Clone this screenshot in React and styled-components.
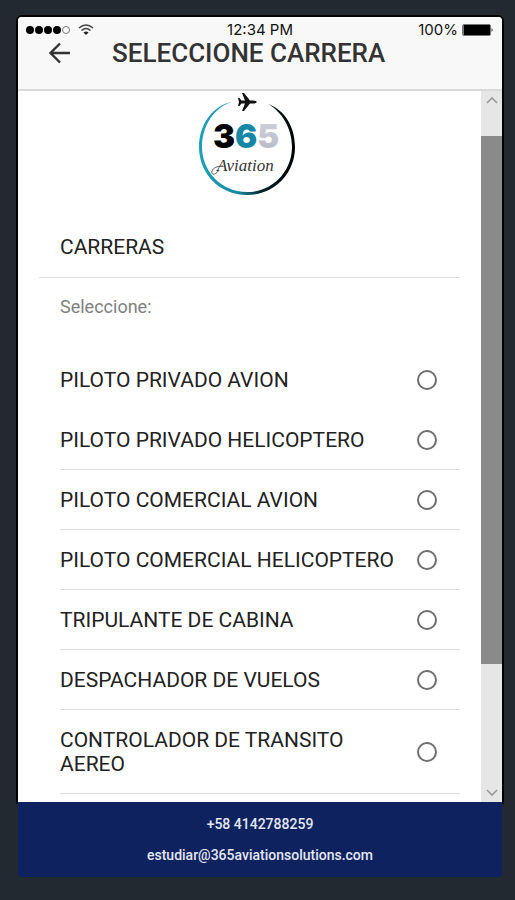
import React, { useState } from 'react';
import styled, { createGlobalStyle } from 'styled-components';

const GlobalStyle = createGlobalStyle`
  * {
    box-sizing: border-box;
  }

  body {
    margin: 0;
    background-color: #232931;
    font-family: Roboto, 'Liberation Sans', sans-serif;
  }
`;

const Page = styled.div`
  display: flex;
  flex-direction: column;
  height: 100vh;
  padding: 17px 13px 23px 18px;
`;

const Screen = styled.div`
  display: flex;
  flex-direction: column;
  flex: 1;
  min-height: 0;
  background-color: #fff;
  border-radius: 4px 4px 0 0;
  box-shadow: 0 0 0 2px #000;
`;

const Header = styled.header`
  background-color: #f8f8f8;
  border-bottom: 2px solid #d9d9d9;
  border-radius: 4px 4px 0 0;
  padding-bottom: 22px;
`;

const StatusBar = styled.div`
  display: grid;
  grid-template-columns: 1fr auto 1fr;
  align-items: center;
  height: 22px;
  padding: 4px 8px 0;
  color: #111;
  font-family: Inter, sans-serif;
  font-size: 15px;
  line-height: 18px;
`;

const Signal = styled.div`
  display: flex;
  align-items: center;
  gap: 8px;
`;

const Battery = styled.div`
  display: flex;
  align-items: center;
  justify-content: flex-end;
  gap: 4px;
`;

const TitleBar = styled.div`
  display: flex;
  align-items: center;
  gap: 40px;
  height: 28px;
  padding: 0 30px;
`;

const BackButton = styled.button`
  display: flex;
  padding: 0;
  border: none;
  background: none;
  color: #333;
  cursor: pointer;
`;

const Title = styled.h1`
  margin: 0;
  color: #333;
  font-size: 26px;
  font-weight: 500;
  line-height: 28px;
  white-space: nowrap;
`;

const Body = styled.div`
  display: flex;
  flex: 1;
  min-height: 0;
`;

const Content = styled.main`
  flex: 1;
  min-width: 0;
  padding: 0 21px;
  overflow: hidden;
`;

const LogoBox = styled.div`
  display: flex;
  justify-content: center;
  height: 126px;
`;

const SectionTitle = styled.h2`
  margin: 0;
  padding: 18px 21px;
  border-bottom: 1px solid #dedede;
  color: #222;
  font-size: 21px;
  font-weight: 400;
  line-height: 24px;
`;

const Options = styled.fieldset`
  min-width: 0;
  margin: 0;
  padding: 0 0 0 21px;
  border: none;
`;

const Legend = styled.legend`
  padding: 17px 0 31px;
  color: #808080;
  font-size: 18px;
  line-height: 24px;
`;

const Option = styled.label`
  display: flex;
  align-items: center;
  justify-content: space-between;
  gap: 12px;
  padding: 18px 23px 18px 0;
  box-shadow: ${(props) => (props.$divider ? 'inset 0 -1px #dedede' : 'none')};
  color: #222;
  font-size: 21px;
  line-height: 24px;
  cursor: pointer;
`;

const Radio = styled.input`
  appearance: none;
  flex: none;
  width: 20px;
  height: 20px;
  margin: 0;
  border: 2px solid #6e6e6e;
  border-radius: 50%;

  &:checked {
    background: radial-gradient(#0f2260 40%, #fff 50%);
  }
`;

const ScrollBar = styled.div`
  display: flex;
  flex-direction: column;
  width: 21px;
  background-color: #e6e6e6;
`;

const ScrollButton = styled.button`
  display: flex;
  flex: ${(props) => props.$size};
  align-items: ${(props) => props.$align};
  justify-content: center;
  padding: 0;
  border: none;
  background: none;
  color: #999;

  svg {
    margin: 5px 0;
  }
`;

const Thumb = styled.div`
  flex: 526;
  background-color: #8a8a8a;
`;

const Footer = styled.footer`
  display: flex;
  flex-direction: column;
  align-items: center;
  gap: 11px;
  padding: 12px 0;
  background-color: #0f2260;
  border-radius: 0 0 2px 2px;
`;

const FooterLink = styled.a`
  color: #e4e7f2;
  font-size: 14px;
  font-weight: 500;
  line-height: 20px;
  text-decoration: none;
`;

const careers = [
  'PILOTO PRIVADO AVION',
  'PILOTO PRIVADO HELICOPTERO',
  'PILOTO COMERCIAL AVION',
  'PILOTO COMERCIAL HELICOPTERO',
  'TRIPULANTE DE CABINA',
  'DESPACHADOR DE VUELOS',
  'CONTROLADOR DE TRANSITO AEREO',
];

function Logo() {
  return (
    <svg width="106" height="106" viewBox="0 0 106 106" role="img" aria-label="365 Aviation">
      <defs>
        <linearGradient id="ring" x1="0" y1="0" x2="1" y2="0">
          <stop offset="0" stopColor="#1ba0b8" />
          <stop offset="0.4" stopColor="#168ba1" />
          <stop offset="0.65" stopColor="#06242c" />
          <stop offset="1" stopColor="#000" />
        </linearGradient>
        <linearGradient id="silver" x1="0" y1="0" x2="0" y2="1">
          <stop offset="0" stopColor="#d3d4dd" />
          <stop offset="1" stopColor="#b4b6c2" />
        </linearGradient>
      </defs>
      {/* the ring is thin at both ends and thick at the bottom */}
      <path
        d="M38 10 C15 14 2 34 2 56 C2 83 23 104 50 104 C77 104 98 83 98 56 C98 36 88 19 71 13 C85 21 95 37 95 56 C95 80 76 101 50 101 C24 101 5 80 5 56 C5 35 17 15 38 10 Z"
        fill="url(#ring)"
      />
      {/* plane, nose to the right */}
      <path
        d="M60 11 Q59 9.500 56 9.500 L53 9.500 L47 2 L45 2 L48 9.500 L44.500 9.500 L42.500 7 L41 7 L42 11 L41 15 L42.500 15 L44.500 12.500 L48 12.500 L45 20 L47 20 L53 12.500 L56 12.500 Q59 12.500 60 11 Z"
        fill="#111"
      />
      <text x="16" y="57" fontFamily="Inter, sans-serif" fontWeight="900" fontSize="33">
        <tspan fill="#000">3</tspan>
        <tspan fill="#1687a5">6</tspan>
        <tspan fill="url(#silver)">5</tspan>
      </text>
      <text
        x="20"
        y="80"
        fill="#333"
        fontFamily="'Liberation Serif', serif"
        fontStyle="italic"
        fontSize="17"
      >
        Aviation
      </text>
      <path d="M22 79 C18 85 14 84 15 80 C16 77 20 75 26 75" fill="none" stroke="#555" />
    </svg>
  );
}

function App() {
  const [selected, setSelected] = useState('');

  return (
    <>
      <GlobalStyle />
      <Page>
        <Screen>
          <Header>
            <StatusBar>
              <Signal>
                <svg width="44" height="8" viewBox="0 0 44 8">
                  {[4, 13, 22, 31].map((x) => (
                    <circle key={x} cx={x} cy="4" r="4" fill="#000" />
                  ))}
                  <circle cx="40" cy="4" r="3.5" fill="none" stroke="#777" />
                </svg>
                <svg width="16" height="12" viewBox="0 0 16 12" fill="none" stroke="#444" strokeWidth="1.6">
                  <path d="M1 4 Q8 -2 15 4" />
                  <path d="M3.5 6.5 Q8 2.5 12.5 6.5" />
                  <path d="M5.5 8.5 Q8 6.5 10.5 8.5 L8 11 Z" fill="#222" stroke="none" />
                </svg>
              </Signal>
              <span>12:34 PM</span>
              <Battery>
                <span>100%</span>
                <svg width="32" height="12" viewBox="0 0 32 12">
                  <rect x="0.5" y="0.5" width="28" height="11" rx="1.5" fill="#777" stroke="#777" />
                  <rect x="2" y="1" width="26" height="10" fill="#000" />
                  <path d="M29.5 4 Q32 6 29.5 8 Z" fill="#444" />
                </svg>
              </Battery>
            </StatusBar>
            <TitleBar>
              <BackButton aria-label="Volver">
                <svg width="24" height="22" viewBox="0 0 24 22" fill="none" stroke="currentColor" strokeWidth="2.4">
                  <path d="M22 11 H3 M12 1.5 L2.5 11 L12 20.5" />
                </svg>
              </BackButton>
              <Title>SELECCIONE CARRERA</Title>
            </TitleBar>
          </Header>

          <Body>
            <Content>
              <LogoBox>
                <Logo />
              </LogoBox>
              <SectionTitle>CARRERAS</SectionTitle>
              <Options>
                <Legend>Seleccione:</Legend>
                {careers.map((career, index) => (
                  <Option key={career} $divider={index > 0}>
                    {career}
                    <Radio
                      type="radio"
                      name="career"
                      value={career}
                      checked={selected === career}
                      onChange={() => setSelected(career)}
                    />
                  </Option>
                ))}
              </Options>
            </Content>
            <ScrollBar>
              <ScrollButton $size={45} $align="flex-start" aria-label="Subir">
                <svg width="12" height="8" viewBox="0 0 12 8" fill="none" stroke="currentColor" strokeWidth="1.6">
                  <path d="M1 7 L6 2 L11 7" />
                </svg>
              </ScrollButton>
              <Thumb />
              <ScrollButton $size={138} $align="flex-end" aria-label="Bajar">
                <svg width="12" height="8" viewBox="0 0 12 8" fill="none" stroke="currentColor" strokeWidth="1.6">
                  <path d="M1 1 L6 6 L11 1" />
                </svg>
              </ScrollButton>
            </ScrollBar>
          </Body>
        </Screen>

        <Footer>
          <FooterLink href="tel:+584142788259">+58 4142788259</FooterLink>
          <FooterLink href="mailto:estudiar@365aviationsolutions.com">
            estudiar@365aviationsolutions.com
          </FooterLink>
        </Footer>
      </Page>
    </>
  );
}

export default App;
